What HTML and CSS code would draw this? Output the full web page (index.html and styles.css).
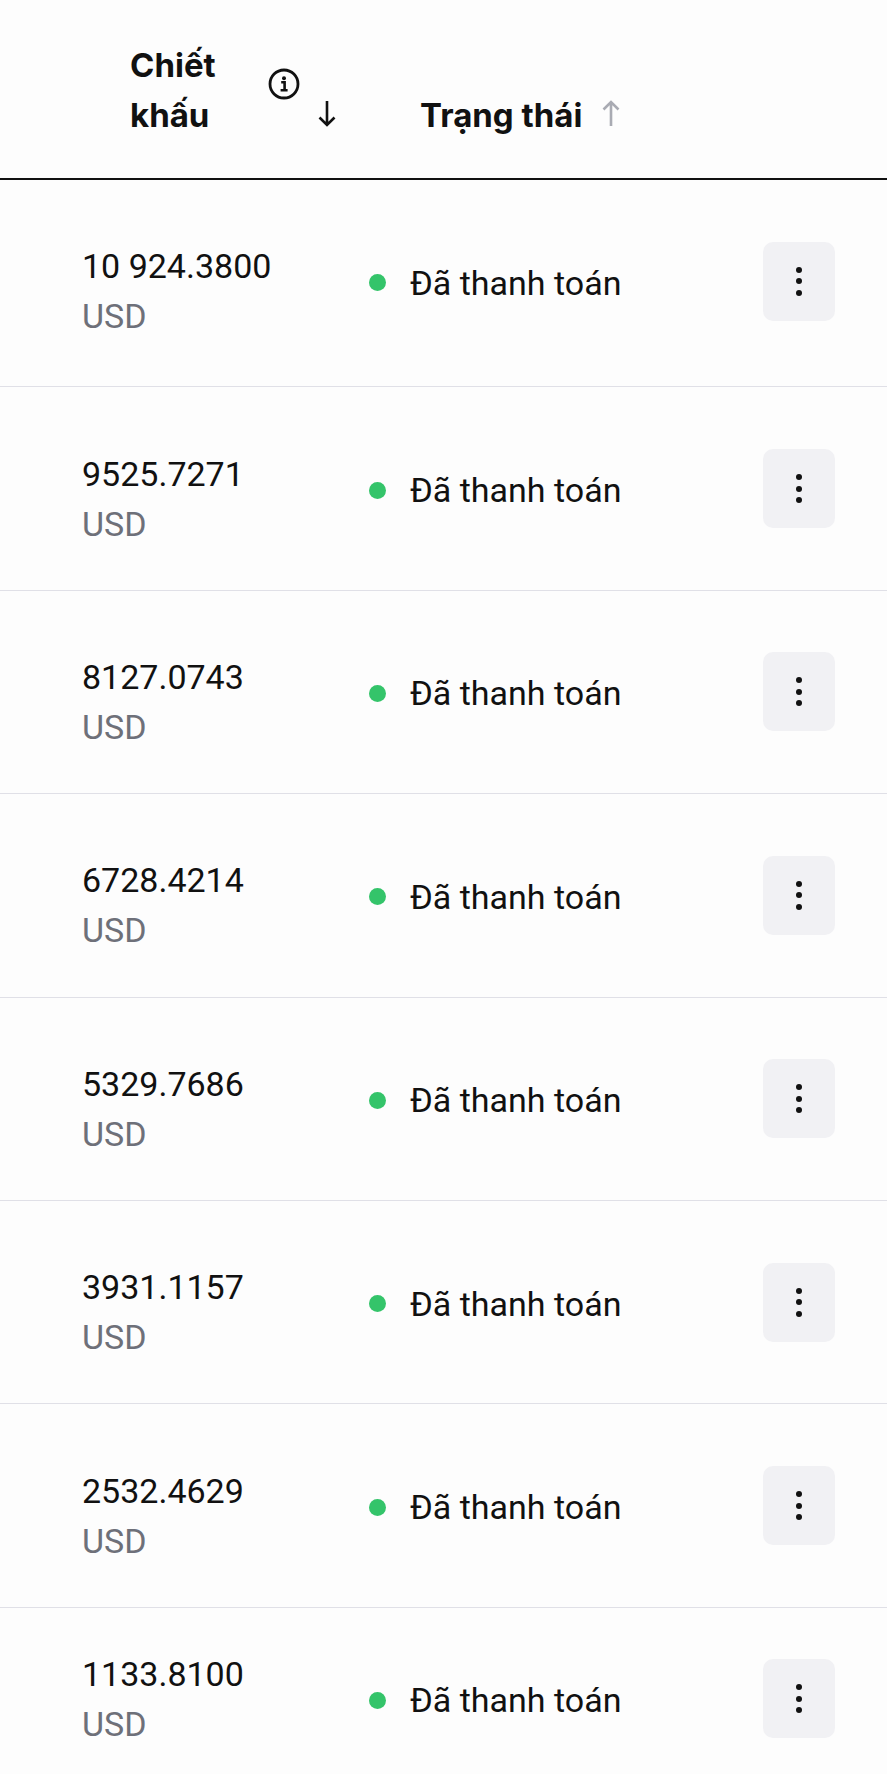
FILE: index.html
```html
<!DOCTYPE html>
<html>
<head>
    <title>Chiết khấu</title>
    <link rel="stylesheet" href="styles.css">
</head>
<body>
    <!-- Table header -->
    <div class="thead">
        <div class="th th-discount">
            <span class="th-label">Chiết khấu</span>
            <svg class="info-icon" width="32" height="32" viewBox="0 0 32 32">
                <circle cx="16" cy="16" r="14" fill="none" stroke="#111" stroke-width="2.8"/>
                <circle cx="16" cy="10.2" r="2" fill="#111"/>
                <path d="M13.2 14.2h3.4v8M12.6 22.2h7" fill="none" stroke="#111" stroke-width="2.6"/>
            </svg>
            <svg class="sort-icon" width="20" height="27" viewBox="0 0 20 27">
                <path d="M10 1v24M2.5 17.5l7.5 7.5 7.5-7.5" fill="none" stroke="#111" stroke-width="2.6"/>
            </svg>
        </div>
        <div class="th th-status">
            <span class="th-label">Trạng thái</span>
            <svg class="sort-icon" width="20" height="27" viewBox="0 0 20 27">
                <path d="M10 26V2M2.5 9.5L10 2l7.5 7.5" fill="none" stroke="#a9abb3" stroke-width="2.6"/>
            </svg>
        </div>
    </div>

    <!-- Table rows -->
    <div class="tbody">
        <div class="row">
            <div class="amount"><div>10 924.3800</div><div class="currency">USD</div></div>
            <div class="status"><span class="dot"></span>Đã thanh toán</div>
            <div class="menu-btn"><span></span><span></span><span></span></div>
        </div>
        <div class="row">
            <div class="amount"><div>9525.7271</div><div class="currency">USD</div></div>
            <div class="status"><span class="dot"></span>Đã thanh toán</div>
            <div class="menu-btn"><span></span><span></span><span></span></div>
        </div>
        <div class="row">
            <div class="amount"><div>8127.0743</div><div class="currency">USD</div></div>
            <div class="status"><span class="dot"></span>Đã thanh toán</div>
            <div class="menu-btn"><span></span><span></span><span></span></div>
        </div>
        <div class="row">
            <div class="amount"><div>6728.4214</div><div class="currency">USD</div></div>
            <div class="status"><span class="dot"></span>Đã thanh toán</div>
            <div class="menu-btn"><span></span><span></span><span></span></div>
        </div>
        <div class="row">
            <div class="amount"><div>5329.7686</div><div class="currency">USD</div></div>
            <div class="status"><span class="dot"></span>Đã thanh toán</div>
            <div class="menu-btn"><span></span><span></span><span></span></div>
        </div>
        <div class="row">
            <div class="amount"><div>3931.1157</div><div class="currency">USD</div></div>
            <div class="status"><span class="dot"></span>Đã thanh toán</div>
            <div class="menu-btn"><span></span><span></span><span></span></div>
        </div>
        <div class="row">
            <div class="amount"><div>2532.4629</div><div class="currency">USD</div></div>
            <div class="status"><span class="dot"></span>Đã thanh toán</div>
            <div class="menu-btn"><span></span><span></span><span></span></div>
        </div>
        <div class="row">
            <div class="amount"><div>1133.8100</div><div class="currency">USD</div></div>
            <div class="status"><span class="dot"></span>Đã thanh toán</div>
            <div class="menu-btn"><span></span><span></span><span></span></div>
        </div>
    </div>
</body>
</html>
```

FILE: styles.css
```css
/* Reset */
* {
  margin: 0;
  padding: 0;
  box-sizing: border-box;
}

body {
  background: #fdfdfd;
  color: #111;
  font-family: Roboto, "Noto Sans", sans-serif;
}

/* Header */
.thead {
  display: flex;
  align-items: flex-end;
  height: 180px;
  padding-bottom: 38px;
  border-bottom: 2px solid #111;
  font-family: Inter, "Noto Sans", sans-serif;
  font-weight: 700;
  font-size: 33px;
  line-height: 50px;
}

.th {
  display: flex;
  align-items: flex-end;
}

.th-discount {
  margin-left: 130px;
}

.th-discount .th-label {
  width: 138px;
}

.info-icon {
  align-self: center;
  margin-bottom: 12px;
}

.sort-icon {
  margin-bottom: 13px;
}

.th-discount .sort-icon {
  margin-left: 17px;
}

.th-status {
  margin-left: 83px;
}

.th-status .sort-icon {
  margin-left: 19px;
}

/* Rows */
.row {
  display: grid;
  grid-template-columns: 287px 1fr 72px;
  align-items: center;
  height: 203.4px;
  padding: 0 52px 0 82px;
  border-bottom: 1px solid #e0e0e7;
  font-size: 34px;
  line-height: 50px;
}

.row:first-child {
  height: 207.4px;
  padding-bottom: 4px;
}

.row:last-child {
  height: 182px;
  border-bottom: none;
}

.amount {
  margin-top: 20px;
}

.row:last-child .amount {
  margin-top: 0;
}

.currency {
  color: #6e7079;
}

.status {
  display: flex;
  align-items: center;
  margin-top: 3px;
}

.dot {
  width: 17px;
  height: 17px;
  border-radius: 50%;
  background: #34c46a;
  margin-right: 24px;
}

.menu-btn {
  height: 79px;
  border-radius: 10px;
  background: #f1f1f4;
  display: flex;
  flex-direction: column;
  align-items: center;
  justify-content: center;
  gap: 5.5px;
}

.menu-btn span {
  width: 6px;
  height: 6px;
  border-radius: 50%;
  background: #111;
}
```
